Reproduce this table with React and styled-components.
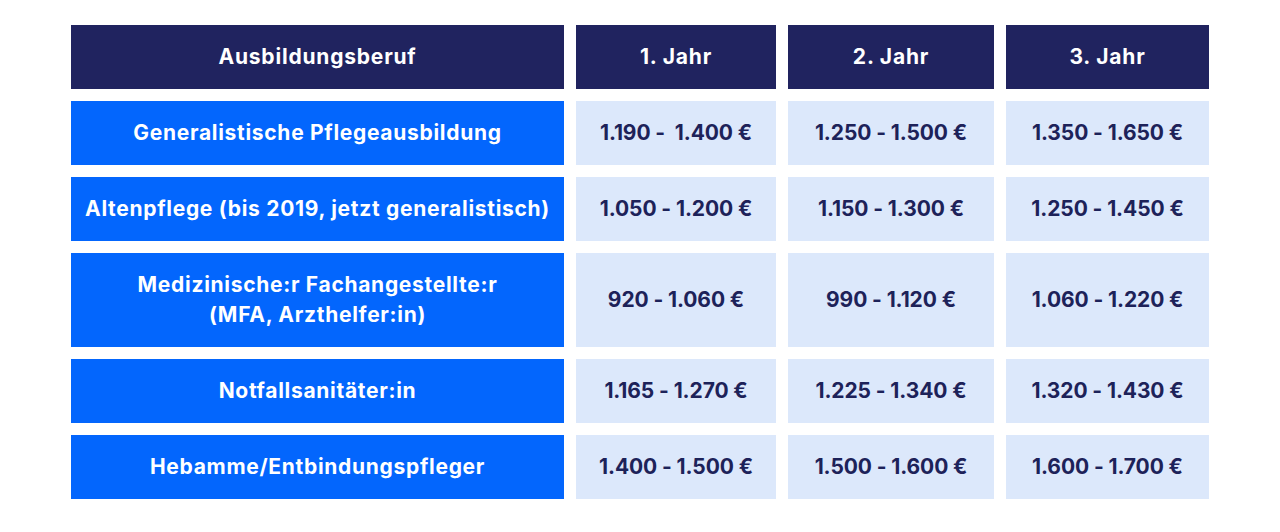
import React from 'react';
import styled, { createGlobalStyle } from 'styled-components';

const GlobalStyle = createGlobalStyle`
  html, body {
    margin: 0;
    padding: 0;
    background: #ffffff;
  }
  body {
    font-family: 'Inter', 'Noto Sans', sans-serif;
  }
`;

const Page = styled.div`
  width: 1280px;
  height: 532px;
  padding-top: 25px;
  box-sizing: border-box;
  display: flex;
  justify-content: center;
`;

const Table = styled.div`
  display: grid;
  grid-template-columns: 493px 200px 206px 203px;
  gap: 12px;
  align-content: start;
`;

const Cell = styled.div`
  display: flex;
  align-items: center;
  justify-content: center;
  text-align: center;
  font-weight: 700;
  font-size: 21px;
  line-height: 30px;
  height: ${(p) => (p.$tall ? '94px' : '64px')};
`;

const HeadCell = styled(Cell)`
  background: #20235f;
  color: #ffffff;
  letter-spacing: 0.8px;
`;

const NameCell = styled(Cell)`
  background: #0366fd;
  color: #ffffff;
  letter-spacing: 0.7px;
`;

const ValueCell = styled(Cell)`
  background: #dce8fb;
  color: #1d2259;
  letter-spacing: -0.1px;
  white-space: pre;
`;

const headers = ['Ausbildungsberuf', '1. Jahr', '2. Jahr', '3. Jahr'];

const rows = [
  { name: 'Generalistische Pflegeausbildung', values: ['1.190 -  1.400 €', '1.250 - 1.500 €', '1.350 - 1.650 €'] },
  { name: 'Altenpflege (bis 2019, jetzt generalistisch)', values: ['1.050 - 1.200 €', '1.150 - 1.300 €', '1.250 - 1.450 €'] },
  { name: ['Medizinische:r Fachangestellte:r', '(MFA, Arzthelfer:in)'], values: ['920 - 1.060 €', '990 - 1.120 €', '1.060 - 1.220 €'], tall: true },
  { name: 'Notfallsanitäter:in', values: ['1.165 - 1.270 €', '1.225 - 1.340 €', '1.320 - 1.430 €'] },
  { name: 'Hebamme/Entbindungspfleger', values: ['1.400 - 1.500 €', '1.500 - 1.600 €', '1.600 - 1.700 €'] },
];

export default function App() {
  return (
    <Page>
      <GlobalStyle />
      <Table>
        {headers.map((h) => (
          <HeadCell key={h}>{h}</HeadCell>
        ))}
        {rows.map((row, i) => (
          <React.Fragment key={i}>
            <NameCell $tall={row.tall}>
              {Array.isArray(row.name) ? (
                <span>
                  {row.name[0]}
                  <br />
                  {row.name[1]}
                </span>
              ) : (
                row.name
              )}
            </NameCell>
            {row.values.map((v, j) => (
              <ValueCell key={j} $tall={row.tall}>
                {v}
              </ValueCell>
            ))}
          </React.Fragment>
        ))}
      </Table>
    </Page>
  );
}
